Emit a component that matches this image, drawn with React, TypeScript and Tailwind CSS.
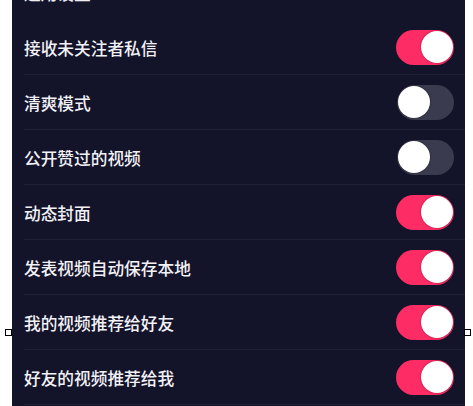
const rows: { label: string; on: boolean }[] = [
  { label: "接收未关注者私信", on: true },
  { label: "清爽模式", on: false },
  { label: "公开赞过的视频", on: false },
  { label: "动态封面", on: true },
  { label: "发表视频自动保存本地", on: true },
  { label: "我的视频推荐给好友", on: true },
  { label: "好友的视频推荐给我", on: true },
];

function Toggle({ on }: { on: boolean }) {
  return (
    <div
      className={
        on
          ? "w-[58px] h-[35px] rounded-full bg-[#fe2c64] flex items-center justify-end pr-[1.5px]"
          : "w-[57px] h-[35px] rounded-full bg-[#3b3b4f] flex items-center justify-start pl-[1px]"
      }
    >
      <div className="w-[32px] h-[32px] rounded-full bg-white shadow-[0_0_2px_rgba(0,0,0,0.5)]" />
    </div>
  );
}

export default function App() {
  return (
    <div
      className="relative w-[473px] h-[406px] bg-white overflow-hidden"
      style={{ fontFamily: '"Noto Sans CJK SC", "Noto Sans", sans-serif' }}
    >
      <div className="ml-[12px] w-[453px] h-[406px] bg-[#13132a] overflow-hidden">
        <div className="h-[20px] overflow-hidden pl-3">
          <div className="-mt-[19px] text-[16.7px] font-medium text-[#eeeef2] leading-[24px]">通用设置</div>
        </div>
        {rows.map((r) => (
          <div key={r.label} className="ml-3 pr-[11px] h-[55px] border-b border-[#1f1f38] flex items-center justify-between">
            <span className="text-[16.7px] font-medium text-[#f2f2f6] leading-none pt-[3px]">{r.label}</span>
            <Toggle on={r.on} />
          </div>
        ))}
      </div>
      <div className="absolute left-[5px] top-[329px] w-[7px] h-[7px] border border-black bg-white" />
      <div className="absolute left-[464px] top-[329px] w-[7px] h-[7px] border border-black bg-white" />
    </div>
  );
}
